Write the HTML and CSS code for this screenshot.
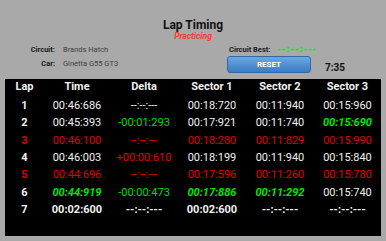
FILE: index.html
```html
<!DOCTYPE html>
<html lang="en">
<head>
    <meta charset="UTF-8">
    <meta name="viewport" content="width=device-width, initial-scale=1.0">
    <title>Lap Timing</title>
    <link rel="stylesheet" href="styles.css">
</head>
<body>
    <div id="header">
        <div class="title">Lap Timing</div>
        <div class="status">Practicing</div>
    </div>

    <div id="info">
        <div class="session">
            <span class="label">Circuit:</span>
            <span class="value">Brands Hatch</span>
            <span class="label">Car:</span>
            <span class="value">Ginetta G55 GT3</span>
        </div>
        <div class="controls">
            <div class="record">
                <span class="label">Circuit Best:</span>
                <span class="record-time">--:--:---</span>
            </div>
            <div class="actions">
                <button class="reset">RESET</button>
                <span class="clock">7:35</span>
            </div>
        </div>
    </div>

    <div id="laps">
        <div class="row head">
            <span>Lap</span><span>Time</span><span>Delta</span><span>Sector 1</span><span>Sector 2</span><span>Sector 3</span>
        </div>
        <div class="row">
            <span class="lap">1</span><span>00:46:686</span><span>--:--:---</span><span>00:18:720</span><span>00:11:940</span><span>00:15:960</span>
        </div>
        <div class="row">
            <span class="lap">2</span><span>00:45:393</span><span class="faster">-00:01:293</span><span>00:17:921</span><span>00:11:740</span><span class="best">00:15:690</span>
        </div>
        <div class="row slow">
            <span class="lap">3</span><span>00:46:100</span><span>--:--:---</span><span>00:18:280</span><span>00:11:829</span><span>00:15:990</span>
        </div>
        <div class="row">
            <span class="lap">4</span><span>00:46:003</span><span class="slower">+00:00:610</span><span>00:18:199</span><span>00:11:940</span><span>00:15:840</span>
        </div>
        <div class="row slow">
            <span class="lap">5</span><span>00:44:696</span><span>--:--:---</span><span>00:17:596</span><span>00:11:260</span><span>00:15:780</span>
        </div>
        <div class="row">
            <span class="lap">6</span><span class="best">00:44:919</span><span class="faster">-00:00:473</span><span class="best">00:17:886</span><span class="best">00:11:292</span><span>00:15:740</span>
        </div>
        <div class="row current">
            <span class="lap">7</span><span>00:02:600</span><span>--:--:---</span><span>00:02:600</span><span>--:--:---</span><span>--:--:---</span>
        </div>
    </div>
</body>
</html>
```

FILE: styles.css
```css
body {
    margin: 0;
    height: 241px;
    background: #a9a9a9;
    font-family: Roboto, 'Liberation Sans', sans-serif;
    color: #111;
    overflow: hidden;
}

#header {
    padding-top: 19px;
    text-align: center;
}

.title {
    font-size: 12px;
    line-height: 12px;
    font-weight: bold;
}

.status {
    font-size: 8.5px;
    line-height: 10px;
    font-weight: bold;
    font-style: italic;
    color: #f23a3a;
}

#info {
    display: flex;
    margin-top: 1px;
    font-size: 7.5px;
}

.session {
    display: grid;
    grid-template-columns: 27px auto;
    grid-auto-rows: 14px;
    column-gap: 8px;
    align-items: center;
    width: 199px;
    padding-left: 28px;
}

.label {
    font-weight: bold;
    text-align: right;
    color: #1a1a1a;
}

.value {
    color: #404040;
}

.controls {
    display: flex;
    flex-direction: column;
}

.record {
    display: flex;
    align-items: center;
    gap: 7px;
    height: 14px;
    padding-left: 2px;
}

.record-time {
    font-family: 'DejaVu Sans', sans-serif;
    color: #1ee01e;
    font-size: 8px;
    font-weight: bold;
    letter-spacing: 1.1px;
    -webkit-text-stroke: 0.3px #1ee01e;
}

.actions {
    display: flex;
    align-items: flex-end;
    gap: 14px;
}

.reset {
    width: 84px;
    height: 17px;
    padding: 0;
    border: 1px solid #3466a4;
    border-radius: 3px;
    background: linear-gradient(#69a9e2, #3b7cc4);
    color: #fff;
    font-family: inherit;
    font-size: 8px;
    font-weight: bold;
}

.clock {
    font-size: 10px;
    line-height: 12px;
    font-weight: bold;
    margin-bottom: -1px;
}

#laps {
    margin: 6px 5px 0;
    height: 157px;
    background: #000;
    color: #f2f2f2;
    font-size: 11px;
}

.row {
    display: grid;
    grid-template-columns: 39px 66px 68px 68px 68px 67px;
    height: 17.33px;
    align-items: center;
    text-align: center;
    white-space: nowrap;
}

.row.head {
    height: 18px;
    align-items: start;
    line-height: 16px;
    font-weight: bold;
}

.lap {
    font-weight: bold;
}

.slow span,
.slower {
    color: #e00000;
}

.faster {
    color: #00dc00;
}

.row .best {
    color: #00e600;
    font-weight: bold;
    font-style: italic;
}

.current span {
    font-weight: bold;
}
```
